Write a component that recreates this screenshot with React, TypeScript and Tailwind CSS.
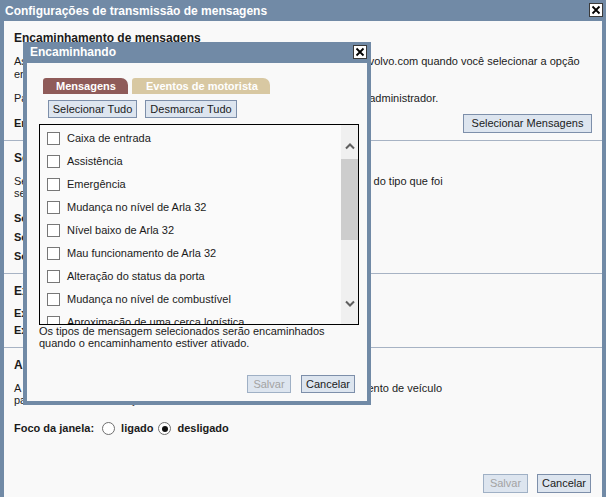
import type { ReactNode } from "react";

// Message forwarding settings with the "Encaminhando" picker dialog open on top

const messageTypes = [
  "Caixa de entrada",
  "Assistência",
  "Emergência",
  "Mudança no nível de Arla 32",
  "Nível baixo de Arla 32",
  "Mau funcionamento de Arla 32",
  "Alteração do status da porta",
  "Mudança no nível de combustível",
  "Aproximação de uma cerca logística",
  "Saída de uma cerca logística",
  "Entrada em uma cerca logística",
];

function CloseBox() {
  return (
    <span className="flex h-[14px] w-[14px] items-center justify-center border border-[#3a3a3a] bg-white">
      <svg width="10" height="10" viewBox="0 0 10 10">
        <path d="M1.5 1.5 L8.5 8.5 M8.5 1.5 L1.5 8.5" stroke="#000" strokeWidth="1.8" />
      </svg>
    </span>
  );
}

function Btn({
  children,
  className,
  disabled,
}: {
  children: ReactNode;
  className: string;
  disabled?: boolean;
}) {
  return (
    <button
      type="button"
      className={[
        "flex items-center justify-center border bg-[#dde5ef] text-[11px] leading-[13px]",
        disabled ? "border-[#9fb0c5] text-[#a3a3a3]" : "border-[#7d8faa] text-[#1b1b1b]",
        className,
      ].join(" ")}
    >
      {children}
    </button>
  );
}

function Radio({ checked }: { checked?: boolean }) {
  return (
    <span className="flex h-[13px] w-[13px] items-center justify-center rounded-full border border-[#6f6f6f] bg-white">
      {checked && <span className="h-[6px] w-[6px] rounded-full bg-[#111]" />}
    </span>
  );
}

function Chevron({ down }: { down?: boolean }) {
  return (
    <svg width="10" height="7" viewBox="0 0 10 7">
      <path
        d={down ? "M1 1.5 L5 5.5 L9 1.5" : "M1 5.5 L5 1.5 L9 5.5"}
        fill="none"
        stroke="#5f5f5f"
        strokeWidth="2"
      />
    </svg>
  );
}

function ForwardingDialog() {
  return (
    <div className="absolute left-[23px] top-[42px] flex h-[363px] w-[348px] flex-col bg-[#718aa6]">
      <div className="flex h-[21px] pl-[7px] pr-[4px] pt-[3px] text-[12px] font-bold leading-[14px] text-white">
        <span>Encaminhando</span>
        <span className="ml-auto">
          <CloseBox />
        </span>
      </div>

      <div className="mx-[4px] mb-[4px] flex flex-1 flex-col bg-[#f9f9f9]">
        {/* tabs */}
        <div className="ml-[16px] mt-[15px] flex gap-[4px] font-bold leading-[16px] text-white">
          <div className="h-[16px] rounded-tl-[3px] rounded-tr-[7px] bg-[#8f5b59] pl-[13px] pr-[12px]">
            Mensagens
          </div>
          <div className="h-[16px] rounded-tl-[3px] rounded-tr-[7px] bg-[#d8c8a2] pl-[14px] pr-[12px]">
            Eventos de motorista
          </div>
        </div>

        <div className="ml-[21px] mt-[6px] flex gap-[8px]">
          <Btn className="h-[18px] w-[89px]">Selecionar Tudo</Btn>
          <Btn className="h-[18px] w-[92px]">Desmarcar Tudo</Btn>
        </div>

        {/* list with scrollbar */}
        <div className="ml-[12px] mt-[6px] flex h-[201px] w-[320px] border border-black bg-[#fafafa]">
          <div className="flex-1 overflow-hidden pt-[2px]">
            {messageTypes.map((t) => (
              <label key={t} className="flex h-[23px] items-center gap-[7px] pl-[7px]">
                <span className="h-[13px] w-[13px] shrink-0 border border-[#777] bg-white" />
                <span className="whitespace-nowrap">{t}</span>
              </label>
            ))}
          </div>
          <div className="flex w-[17px] flex-col bg-[#f0f0f0]">
            <div className="flex h-[34px] justify-center pt-[18px]">
              <Chevron />
            </div>
            <div className="h-[81px] bg-[#cdcdcd]" />
            <div className="flex justify-center pt-[60px]">
              <Chevron down />
            </div>
          </div>
        </div>

        <p className="ml-[12px] w-[320px] leading-[12px]">
          Os tipos de mensagem selecionados serão encaminhados quando o encaminhamento estiver
          ativado.
        </p>

        <div className="mt-[26px] flex justify-end gap-[10px] pr-[12px]">
          <Btn className="h-[18px] w-[44px]" disabled>
            Salvar
          </Btn>
          <Btn className="h-[18px] w-[54px]">Cancelar</Btn>
        </div>
      </div>
    </div>
  );
}

export default function App() {
  return (
    <div className="relative h-[497px] w-[606px] overflow-hidden bg-[#718aa6] font-['Liberation_Sans',Arial,sans-serif] text-[11px] text-[#1b1b1b]">
      {/* outer window title */}
      <div className="flex h-[21px] pl-[5px] pr-[3px] pt-[4px] text-[12px] font-bold leading-[14px] text-white">
        <span>Configurações de transmissão de mensagens</span>
        <span className="ml-auto -mt-[1px]">
          <CloseBox />
        </span>
      </div>

      <div className="mx-[4px] flex h-[476px] flex-col bg-[#f9f9f9]">
        {/* Encaminhamento */}
        <section className="border-b border-[#a7b3c4] px-[10px] pb-[7px] pt-[10px]">
          <h2 className="text-[12px] font-bold leading-[14px]">Encaminhamento de mensagens</h2>
          <p className="mt-[10px] leading-[13px]">
            As mensagens de texto serão encaminhadas para o endereço de e-mail volvo.com quando você
            selecionar a opção encaminhamento de mensagens.
          </p>
          <p className="mt-[11px] leading-[13px]">
            Para ativar o encaminhamento das mensagens, entre em contato com o administrador.
          </p>
          <div className="mt-[9px] flex h-[19px] items-center justify-between">
            <span className="font-bold">Encaminhamento: desligado</span>
            <Btn className="h-[19px] w-[129px]">Selecionar Mensagens</Btn>
          </div>
        </section>

        {/* Som */}
        <section className="border-b border-[#a7b3c4] px-[10px] pb-[7px] pt-[10px]">
          <h2 className="text-[12px] font-bold leading-[14px]">Som</h2>
          <p className="mt-[10px] leading-[12px]">
            Selecione um som de alerta que será reproduzido ao receber mensagem do tipo que foi
            <br />
            selecionado.
          </p>
          <div className="mt-[10px]">
            <div className="flex h-[19px] items-center font-bold">Som de mensagem: padrão</div>
            <div className="flex h-[19px] items-center font-bold">Som de emergência: sirene</div>
            <div className="flex h-[19px] items-center font-bold">Som de evento: nenhum</div>
          </div>
        </section>

        {/* Exibição */}
        <section className="border-b border-[#a7b3c4] px-[10px] pb-[8px] pt-[10px]">
          <h2 className="text-[12px] font-bold leading-[14px]">Exibição</h2>
          <div className="mt-[7px]">
            <div className="flex h-[17px] items-center font-bold">Exibir mensagens lidas: sim</div>
            <div className="flex h-[17px] items-center font-bold">Exibir eventos de motorista: não</div>
          </div>
        </section>

        {/* Alerta */}
        <section className="px-[10px] pt-[10px]">
          <h2 className="text-[12px] font-bold leading-[14px]">Alerta de janela</h2>
          <p className="mt-[10px] leading-[12px]">
            A janela será exibida no primeiro plano ao chegar uma mensagem ou evento de veículo
            <br />
            para chamar a sua atenção.
          </p>
          <div className="mt-[14px] flex h-[17px] items-center font-bold">
            <span>Foco da janela:</span>
            <span className="ml-[8px]">
              <Radio />
            </span>
            <span className="ml-[6px]">ligado</span>
            <span className="ml-[5px]">
              <Radio checked />
            </span>
            <span className="ml-[6px]">desligado</span>
          </div>
        </section>

        <div className="mt-[37px] flex justify-end gap-[9px] pr-[11px]">
          <Btn className="h-[19px] w-[45px]" disabled>
            Salvar
          </Btn>
          <Btn className="h-[19px] w-[54px]">Cancelar</Btn>
        </div>
      </div>

      <ForwardingDialog />
    </div>
  );
}
